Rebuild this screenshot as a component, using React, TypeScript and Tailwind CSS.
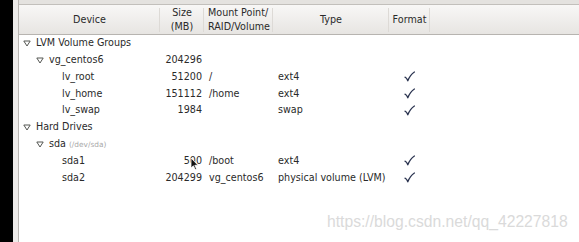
import React from 'react';

type Row = {
  level: number;
  name: string;
  hint?: string;
  expander?: boolean;
  size?: string;
  mount?: string;
  type?: string;
  format?: boolean;
};

const rows: Row[] = [
  { level: 0, name: 'LVM Volume Groups', expander: true },
  { level: 1, name: 'vg_centos6', expander: true, size: '204296' },
  { level: 2, name: 'lv_root', size: '51200', mount: '/', type: 'ext4', format: true },
  { level: 2, name: 'lv_home', size: '151112', mount: '/home', type: 'ext4', format: true },
  { level: 2, name: 'lv_swap', size: '1984', type: 'swap', format: true },
  { level: 0, name: 'Hard Drives', expander: true },
  { level: 1, name: 'sda', hint: '(/dev/sda)', expander: true },
  { level: 2, name: 'sda1', size: '500', mount: '/boot', type: 'ext4', format: true },
  { level: 2, name: 'sda2', size: '204299', mount: 'vg_centos6', type: 'physical volume (LVM)', format: true },
];

const cols = 'grid grid-cols-[141px_44px_69px_116px_41px_1fr]';

function Expander() {
  return (
    <svg width="8" height="7" viewBox="0 0 8 7" className="shrink-0">
      <path d="M0.8 1 L7.2 1 L4 6 Z" fill="none" stroke="#555753" strokeWidth="1" />
    </svg>
  );
}

function Check() {
  return (
    <svg width="11" height="11" viewBox="0 0 11 11">
      <path d="M1 6.2 C2 6.6 3 7.6 3.8 9.8 C5.2 6.2 7.4 3 10.4 1" fill="none" stroke="#2b3450" strokeWidth="1.3" strokeLinecap="round" strokeLinejoin="round" />
    </svg>
  );
}

function Sep() {
  return <div className="absolute right-0 top-[3px] bottom-[2px] w-px bg-[#dddad6]" />;
}

export default function App() {
  return (
    <div className="relative flex w-[579px] h-[242px] overflow-hidden bg-black text-[9.6px] text-[#2a2a2a]" style={{ fontFamily: '"DejaVu Sans", sans-serif' }}>
      <div className="w-[13px] shrink-0 bg-black" />
      <div className="w-[6px] shrink-0 bg-[#edebe9] border-r border-[#b9b6b2]" />
      <div className="flex-1 flex flex-col bg-white">
        <div className="h-[5px] bg-[#e4e2df] border-b border-[#c2bfbb]" />
        <div className={`${cols} h-[30px] bg-gradient-to-b from-[#f8f7f6] to-[#e7e5e2] border-b border-[#b7b4b0] leading-[14px]`}>
          <div className="relative flex items-center justify-center">
            Device
            <Sep />
          </div>
          <div className="relative flex items-center justify-center text-center">
            Size<br />(MB)
            <Sep />
          </div>
          <div className="relative flex items-center pl-[4px]">
            Mount Point/<br />RAID/Volume
            <Sep />
          </div>
          <div className="relative flex items-center justify-center">
            Type
            <Sep />
          </div>
          <div className="relative flex items-center justify-center">
            Format
            <Sep />
          </div>
          <div />
        </div>
        <div className="flex flex-col">
          {rows.map((r) => (
            <div key={r.name} className={`${cols} h-[16.8px] items-center`}>
              <div className="flex items-center" style={{ paddingLeft: 4 + r.level * 13 }}>
                {r.expander ? <Expander /> : <div className="w-[8px] shrink-0" />}
                <span className="ml-[5px] whitespace-nowrap">
                  {r.name}
                  {r.hint && <span className="ml-[3px] text-[7.4px] text-[#a8a8a8]">{r.hint}</span>}
                </span>
              </div>
              <div className="text-right pr-[2px]">{r.size}</div>
              <div className="pl-[5px] whitespace-nowrap">{r.mount}</div>
              <div className="pl-[5px] whitespace-nowrap">{r.type}</div>
              <div className="flex justify-center">{r.format && <Check />}</div>
              <div />
            </div>
          ))}
        </div>
      </div>
      <svg width="9" height="14" viewBox="0 0 9 14" className="absolute left-[190px] top-[157px]">
        <path d="M1 1 L1 11 L3.4 8.8 L5.2 12.6 L6.6 12 L4.8 8.3 L8 8.3 Z" fill="#111" stroke="#fff" strokeWidth="0.8" />
      </svg>
      <div className="absolute left-[327px] top-[212px] text-[15.7px] leading-[20px] text-[#dadada] whitespace-nowrap" style={{ fontFamily: '"Liberation Sans", Arial, sans-serif' }}>
        https://blog.csdn.net/qq_42227818
      </div>
    </div>
  );
}
